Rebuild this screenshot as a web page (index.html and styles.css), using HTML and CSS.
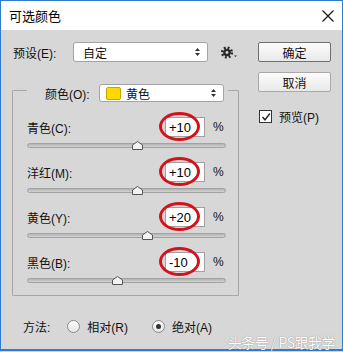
FILE: index.html
```html
<!DOCTYPE html>
<html lang="zh">
<head>
  <meta charset="UTF-8" />
  <meta name="viewport" content="width=device-width, initial-scale=1" />
  <title>可选颜色</title>
  <link rel="stylesheet" href="styles.css">
</head>
<body>
  <div class="dialog">
    <div class="titlebar">
      <span class="title">可选颜色</span>
      <svg class="close" width="12" height="12" viewBox="0 0 12 12">
        <path d="M0.5 0.5 L11.5 11.5 M11.5 0.5 L0.5 11.5" stroke="#111" stroke-width="1.1" fill="none"/>
      </svg>
    </div>
    <div class="body">
      <div class="main">
        <!-- Preset row -->
        <div class="preset-row">
          <label class="preset-label">预设(E):</label>
          <div class="select preset-select">
            <span class="select-text">自定</span>
            <svg class="updown" width="5" height="8" viewBox="0 0 5 8"><path d="M2.5 0 L5 3 L0 3 Z M0 5 L5 5 L2.5 8 Z" fill="#333"/></svg>
          </div>
          <svg class="gear" width="18" height="13" viewBox="0 0 18 13">
            <circle cx="6" cy="6.5" r="3.8" fill="#2a2a2a"/>
            <circle cx="6" cy="6.5" r="4.7" fill="none" stroke="#2a2a2a" stroke-width="2.8" stroke-dasharray="1.8 1.9"/>
            <circle cx="6" cy="6.5" r="1.4" fill="#d8d8d8"/>
            <path d="M13 9.5 L16 9.5 L14.5 11 Z" fill="#333"/>
          </svg>
        </div>

        <!-- Colour group -->
        <fieldset class="group">
          <legend class="group-legend">
            <span class="legend-inner">
              <label class="color-label">颜色(O):</label>
              <span class="select color-select">
                <span class="swatch"></span>
                <span class="select-text">黄色</span>
                <svg class="updown" width="5" height="8" viewBox="0 0 5 8"><path d="M2.5 0 L5 3 L0 3 Z M0 5 L5 5 L2.5 8 Z" fill="#333"/></svg>
              </span>
            </span>
          </legend>

          <div class="slider-row">
            <div class="slider-head">
              <label class="slider-label">青色(C):</label>
              <span class="value-wrap"><input class="value" type="text" value="+10"><span class="mark"></span></span>
              <span class="pct">%</span>
            </div>
            <div class="track"><svg class="thumb" style="left: 104px" width="11" height="9" viewBox="0 0 11 9"><path d="M0.5 8.5 L0.5 4 L5.5 0.5 L10.5 4 L10.5 8.5 Z" fill="#f2f2f2" stroke="#555"/></svg></div>
          </div>

          <div class="slider-row">
            <div class="slider-head">
              <label class="slider-label">洋红(M):</label>
              <span class="value-wrap"><input class="value" type="text" value="+10"><span class="mark"></span></span>
              <span class="pct">%</span>
            </div>
            <div class="track"><svg class="thumb" style="left: 104px" width="11" height="9" viewBox="0 0 11 9"><path d="M0.5 8.5 L0.5 4 L5.5 0.5 L10.5 4 L10.5 8.5 Z" fill="#f2f2f2" stroke="#555"/></svg></div>
          </div>

          <div class="slider-row">
            <div class="slider-head">
              <label class="slider-label">黄色(Y):</label>
              <span class="value-wrap"><input class="value" type="text" value="+20"><span class="mark"></span></span>
              <span class="pct">%</span>
            </div>
            <div class="track"><svg class="thumb" style="left: 114px" width="11" height="9" viewBox="0 0 11 9"><path d="M0.5 8.5 L0.5 4 L5.5 0.5 L10.5 4 L10.5 8.5 Z" fill="#f2f2f2" stroke="#555"/></svg></div>
          </div>

          <div class="slider-row">
            <div class="slider-head">
              <label class="slider-label">黑色(B):</label>
              <span class="value-wrap"><input class="value" type="text" value="-10"><span class="mark"></span></span>
              <span class="pct">%</span>
            </div>
            <div class="track"><svg class="thumb" style="left: 84px" width="11" height="9" viewBox="0 0 11 9"><path d="M0.5 8.5 L0.5 4 L5.5 0.5 L10.5 4 L10.5 8.5 Z" fill="#f2f2f2" stroke="#555"/></svg></div>
          </div>
        </fieldset>

        <!-- Method row -->
        <div class="method-row">
          <span class="method-label">方法:</span>
          <span class="radio"></span>
          <span class="radio-text">相对(R)</span>
          <span class="radio checked"></span>
          <span class="radio-text">绝对(A)</span>
        </div>
      </div>

      <div class="side">
        <button class="btn btn-default">确定</button>
        <button class="btn">取消</button>
        <div class="check-row">
          <span class="checkbox">
            <svg width="10" height="10" viewBox="0 0 10 10"><path d="M1.5 5 L4 7.8 L8.8 1.5" stroke="#222" stroke-width="1.4" fill="none"/></svg>
          </span>
          <span class="check-text">预览(P)</span>
        </div>
      </div>
    </div>
    <div class="watermark">头条号 / PS跟我学</div>
  </div>
</body>
</html>
```

FILE: styles.css
```css
html, body {
  margin: 0;
  padding: 0;
}
body {
  font-family: "Liberation Sans", "Noto Sans CJK SC", sans-serif;
  font-size: 12px;
  color: #111;
  background: #d7d7d7;
}
.dialog {
  position: relative;
  width: 343px;
  height: 351px;
  box-sizing: border-box;
  border: 1px solid #2f7bd1;
  border-bottom-width: 2px;
  background: #d7d7d7;
}
.titlebar {
  height: 29px;
  background: #fff;
  display: flex;
  align-items: center;
  justify-content: space-between;
  padding: 0 8px 0 8px;
}
.title {
  font-size: 13px;
  color: #000;
}
.close {
  display: block;
}
.body {
  display: flex;
  padding: 12px 10px 0 11px;
}
.main {
  width: 227px;
  flex-shrink: 0;
}
.side {
  width: 73px;
  margin-left: 19px;
  display: flex;
  flex-direction: column;
}

/* Preset row */
.preset-row {
  display: flex;
  align-items: center;
  height: 20px;
}
.preset-label {
  width: 61px;
  padding-left: 1px;
  box-sizing: border-box;
}
.select {
  display: flex;
  align-items: center;
  box-sizing: border-box;
  background: #fff;
  border: 1px solid #a3a3a3;
  border-radius: 3px;
}
.preset-select {
  width: 135px;
  height: 20px;
  padding: 0 7px 0 9px;
}
.select-text {
  flex: 1;
}
.updown {
  display: block;
}
.gear {
  display: block;
  margin-left: 13px;
}

/* Colour group */
.group {
  width: 227px;
  min-inline-size: 0;
  box-sizing: border-box;
  margin: 22px 0 0 0;
  padding: 21px 12px 12px 14px;
  border: 1px solid #a6a6a6;
  border-radius: 1px;
}
.group-legend {
  height: 12px;
  padding: 0 4px 0 18px;
}
.legend-inner {
  display: flex;
  align-items: center;
  height: 18px;
}
.color-label {
  width: 54px;
}
.color-select {
  width: 125px;
  height: 18px;
  padding: 0 7px 0 6px;
}
.swatch {
  width: 15px;
  height: 13px;
  box-sizing: border-box;
  background: #ffd800;
  border: 1px solid #c9a400;
  border-radius: 2px;
  margin-right: 5px;
}
.slider-row {
  margin-bottom: 14px;
}
.slider-row:last-of-type {
  margin-bottom: 0;
}
.slider-head {
  display: flex;
  align-items: center;
  height: 20px;
}
.slider-label {
  flex: 1;
}
.value-wrap {
  position: relative;
  display: block;
}
.value {
  display: block;
  width: 40px;
  height: 20px;
  box-sizing: border-box;
  border: 1px solid #a0a0a0;
  padding: 0 0 0 3px;
  font-family: "Liberation Sans", sans-serif;
  font-size: 13px;
  color: #000;
  background: #fff;
}
/* red annotation ring drawn over the value box */
.mark {
  position: absolute;
  left: -6px;
  top: -5px;
  width: 41px;
  height: 29px;
  box-sizing: border-box;
  border: 3px solid #d3121c;
  border-radius: 50%;
}
.pct {
  width: 13px;
  margin-left: 8px;
}
.track {
  position: relative;
  height: 5px;
  margin-top: 6px;
  box-sizing: border-box;
  border: 1px solid #a2a2a2;
  border-radius: 3px;
  background: linear-gradient(#b3b3b3, #d2d2d2);
}
.thumb {
  position: absolute;
  top: -3px;
  display: block;
}

/* Method row */
.method-row {
  display: flex;
  align-items: center;
  height: 20px;
  margin-top: 20px;
  padding-left: 11px;
  white-space: nowrap;
}
.method-label {
  margin-right: 17px;
}
.radio {
  flex-shrink: 0;
  width: 13px;
  height: 13px;
  box-sizing: border-box;
  border: 1px solid #8a8a8a;
  border-radius: 50%;
  background: linear-gradient(#fdfdfd, #e6e6e6);
  display: flex;
  align-items: center;
  justify-content: center;
  margin-right: 7px;
}
.radio.checked::after {
  content: "";
  width: 5px;
  height: 5px;
  border-radius: 50%;
  background: #333;
}
.radio-text {
  margin-right: 24px;
}
.radio-text:last-child {
  margin-right: 0;
}

/* Side buttons */
.btn {
  display: block;
  width: 73px;
  height: 20px;
  padding: 0;
  font-family: "Liberation Sans", "Noto Sans CJK SC", sans-serif;
  font-size: 12px;
  color: #111;
  border: 1px solid #a9a9a9;
  border-radius: 2px;
  background: linear-gradient(#fcfcfc, #e9e9e9);
  margin-bottom: 10px;
}
.btn-default {
  border-color: #6f6f6f;
}
.check-row {
  display: flex;
  align-items: center;
  margin-top: 6px;
  margin-left: 1px;
}
.checkbox {
  width: 13px;
  height: 13px;
  box-sizing: border-box;
  border: 1px solid #333;
  background: #fff;
  display: flex;
  align-items: center;
  justify-content: center;
  margin-right: 7px;
}
.checkbox svg {
  display: block;
}

.watermark {
  position: absolute;
  right: 7px;
  bottom: 0;
  line-height: 14px;
  font-family: "Noto Sans CJK SC", sans-serif;
  font-size: 14px;
  color: #fff;
  text-shadow: 0 0 1px rgba(0, 0, 0, 0.5);
  letter-spacing: -0.5px;
}
```
